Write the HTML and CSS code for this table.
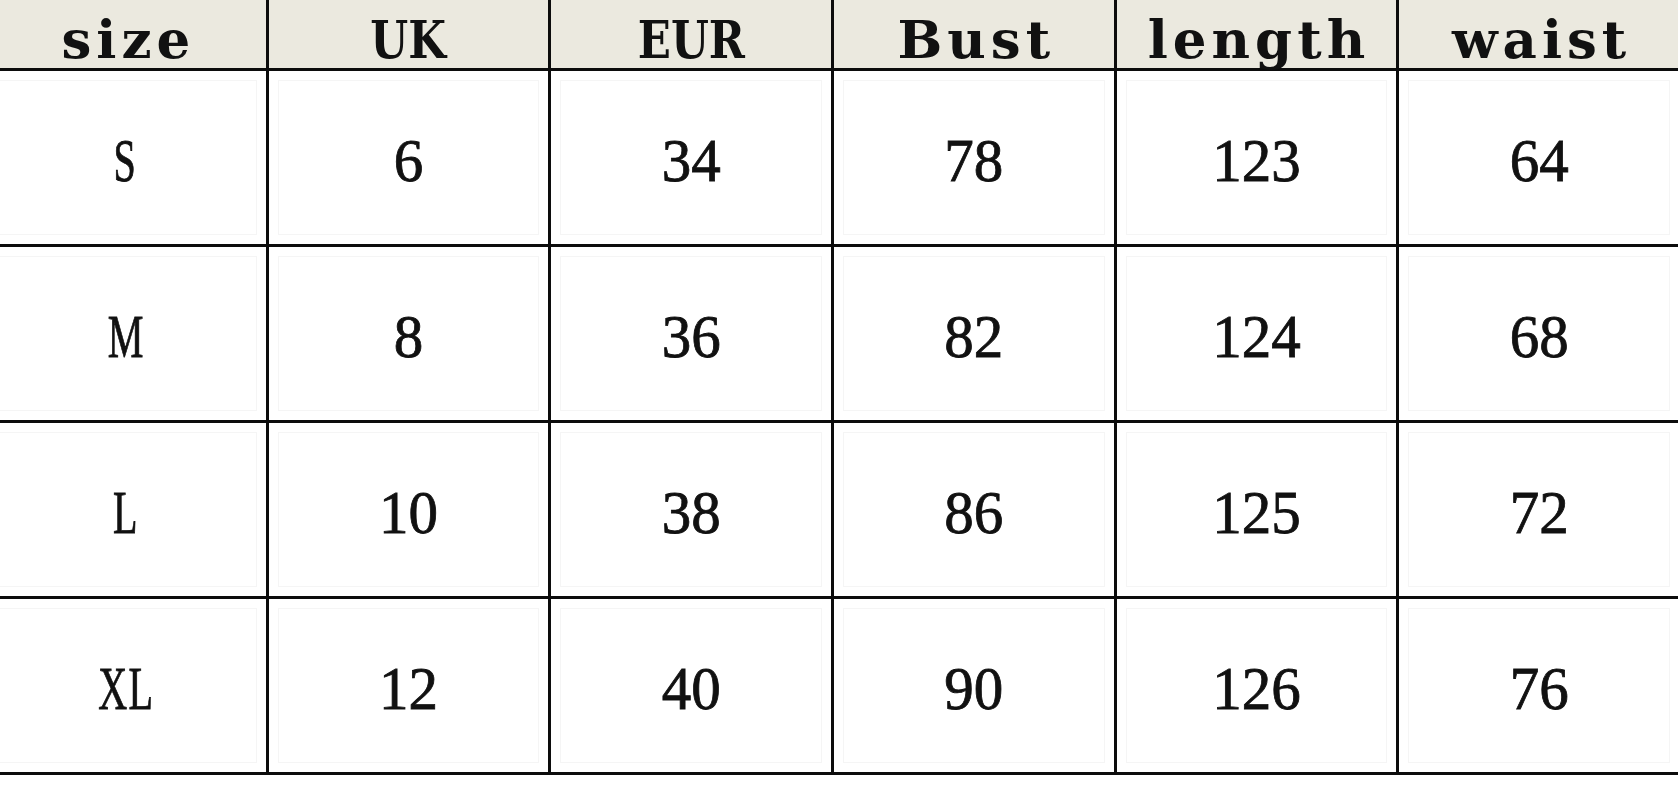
FILE: index.html
```html
<!DOCTYPE html>
<html lang="en">
<head>
<meta charset="utf-8">
<title>Size chart</title>
<link rel="stylesheet" href="styles.css">
</head>
<body>
<div class="sheet">
  <table class="chart">
    <thead>
      <tr>
        <th><span class="hd">size</span></th>
        <th><span class="hd caps">UK</span></th>
        <th><span class="hd caps">EUR</span></th>
        <th><span class="hd">Bust</span></th>
        <th><span class="hd">length</span></th>
        <th><span class="hd">waist</span></th>
      </tr>
    </thead>
    <tbody>
      <tr><td><span class="v ltr">S</span></td><td><span class="v">6</span></td><td><span class="v">34</span></td><td><span class="v">78</span></td><td><span class="v">123</span></td><td><span class="v">64</span></td></tr>
      <tr><td><span class="v ltr">M</span></td><td><span class="v">8</span></td><td><span class="v">36</span></td><td><span class="v">82</span></td><td><span class="v">124</span></td><td><span class="v">68</span></td></tr>
      <tr><td><span class="v ltr">L</span></td><td><span class="v">10</span></td><td><span class="v">38</span></td><td><span class="v">86</span></td><td><span class="v">125</span></td><td><span class="v">72</span></td></tr>
      <tr><td><span class="v ltr">XL</span></td><td><span class="v">12</span></td><td><span class="v">40</span></td><td><span class="v">90</span></td><td><span class="v">126</span></td><td><span class="v">76</span></td></tr>
    </tbody>
  </table>
</div>
</body>
</html>
```

FILE: styles.css
```css
html, body {
  margin: 0;
  padding: 0;
  background: #ffffff;
}
body {
  width: 1678px;
  height: 800px;
  overflow: hidden;
}
.sheet {
  width: 1678px;
  height: 800px;
  overflow: hidden;
  background: #ffffff;
}
.chart {
  border-collapse: collapse;
  table-layout: fixed;
  width: 1699px;
  margin-left: -17px;
  margin-top: -12px;
  color: #111111;
}
.chart th,
.chart td {
  border: 3px solid #0c0c0c;
  text-align: center;
  padding: 0;
}
.chart thead tr {
  height: 80px;
}
.chart th {
  background: #ebe9df;
  vertical-align: bottom;
  padding-bottom: 6px;
}
.chart tbody tr {
  height: 176px;
}
.chart td {
  background: #ffffff;
  vertical-align: middle;
  padding-top: 6px;
  box-shadow: inset 0 0 0 9px #ffffff, inset 0 0 0 10px #f5f5f5;
}
.hd {
  display: inline-block;
  font-family: "DejaVu Serif", "Liberation Serif", serif;
  font-size: 53px;
  line-height: 40px;
  font-weight: bold;
  letter-spacing: 5px;
  margin-right: -5px;
}
.caps {
  letter-spacing: 0;
  margin-right: 0;
  transform: scaleX(0.82);
}
.v {
  display: inline-block;
  font-family: "Liberation Serif", "Times New Roman", serif;
  font-size: 59px;
  line-height: 59px;
  font-weight: normal;
  -webkit-text-stroke: 0.8px #111111;
  transform: scaleY(1.05);
}
.ltr {
  transform: scale(0.68, 1.05);
  letter-spacing: 2px;
}
```
